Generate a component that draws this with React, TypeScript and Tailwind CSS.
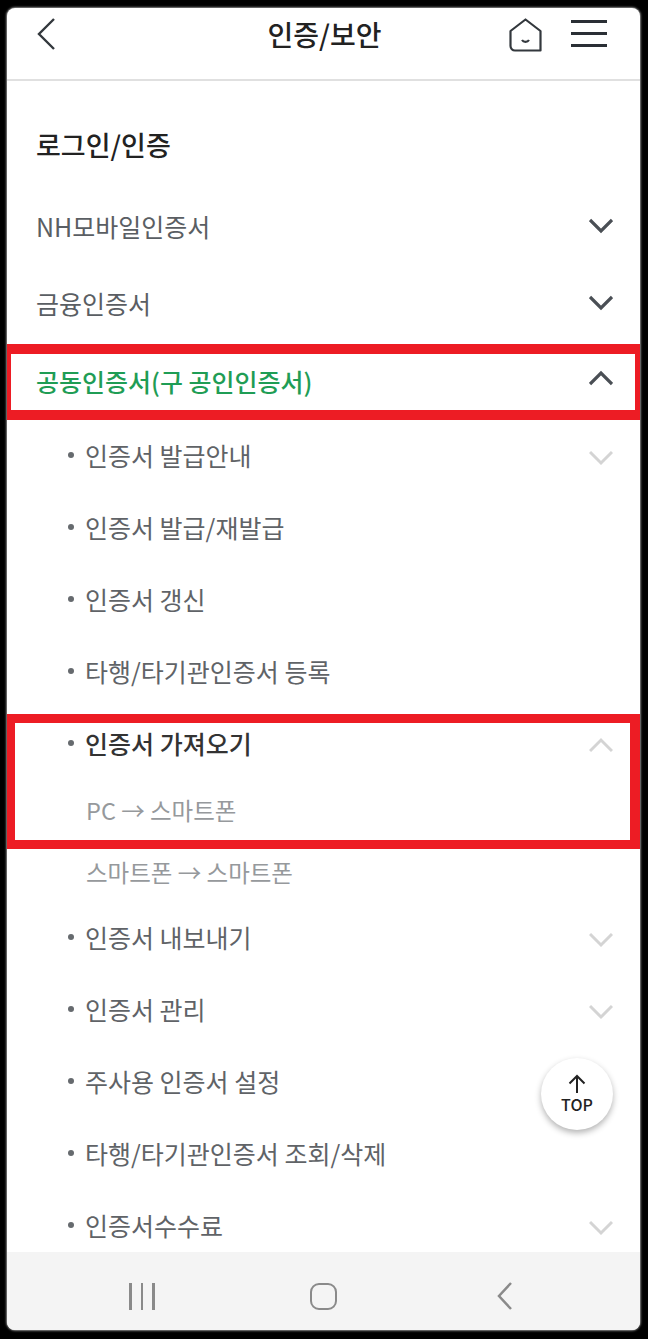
const font = { fontFamily: '"Noto Sans CJK KR", "Noto Sans", sans-serif' };

function Chevron({ up, light }: { up?: boolean; light?: boolean }) {
  let cls = up ? "mb-[6px] text-[#4a4f55]" : "mb-[2px] text-[#4a4f55]";
  if (light) cls = up ? "mt-[2px] text-[#d4d4d4]" : "mt-[4px] text-[#d4d4d4]";
  return (
    <svg width="24" height="16" viewBox="0 0 24 16" fill="none" className={cls}>
      <path d={up ? "M1 14L12 3L23 14" : "M1 2L12 13L23 2"} stroke="currentColor" strokeWidth={light ? 3 : 3.2} />
    </svg>
  );
}

function TopRow({ label, up, green }: { label: string; up?: boolean; green?: boolean }) {
  return (
    <div className="flex h-[77px] items-center justify-between pl-[29px] pr-[27px]">
      <span className={green ? "mt-[2px] text-[25px] font-medium text-[#1f9d55]" : "text-[25px] text-[#5a5e63]"}>{label}</span>
      <Chevron up={up} />
    </div>
  );
}

function SubRow({ label, arrow, bold }: { label: string; arrow?: "up" | "down"; bold?: boolean }) {
  return (
    <div className="flex h-[72px] items-center justify-between pl-[61px] pr-[27px]">
      <div className="flex items-center gap-[11px]">
        <span className="mb-[3px] h-[6px] w-[6px] rounded-full bg-[#666a6e]" />
        <span className={bold ? "text-[25px] font-medium text-[#333]" : "text-[25px] text-[#606367]"}>{label}</span>
      </div>
      {arrow && <Chevron up={arrow === "up"} light />}
    </div>
  );
}

export default function App() {
  return (
    <div className="relative h-[1339px] w-[648px] overflow-hidden bg-black py-[8px] pl-[7px] pr-[8px]" style={font}>
      <div className="relative flex h-[1322px] flex-col overflow-hidden rounded-[8px] bg-white shadow-[0_0_2px_1px_rgba(190,190,190,0.7)]">
        {/* Header */}
        <div className="grid h-[73px] shrink-0 grid-cols-[1fr_auto_1fr] items-center border-b-2 border-[#e0e0e0] pb-[20px] pl-[30px] pr-[33px]">
          <svg width="20" height="34" viewBox="0 0 20 34" fill="none">
            <path d="M17 2L2 17L17 32" stroke="#33383d" strokeWidth="2.4" />
          </svg>
          <span className="ml-[5px] text-[28px] font-medium text-[#222]">인증/보안</span>
          <div className="flex items-center justify-end gap-[29px]">
            <svg width="33" height="34" viewBox="0 0 33 34" fill="none" className="mt-[2px]">
              <path d="M1.5 13L16.5 1.5L31.5 13V32.5H6C3.5 32.5 1.5 30.5 1.5 28Z" stroke="#33383d" strokeWidth="2.2" strokeLinejoin="round" />
              <path d="M13 22C14.5 24.5 18.5 24.5 20 22" stroke="#33383d" strokeWidth="2.2" />
            </svg>
            <div className="flex w-[36px] flex-col gap-[9px]">
              <span className="h-[3px] bg-[#2a2f35]" />
              <span className="h-[3px] bg-[#2a2f35]" />
              <span className="h-[3px] bg-[#2a2f35]" />
            </div>
          </div>
        </div>

        {/* Menu */}
        <div className="flex-1 overflow-hidden">
          <div className="flex h-[107px] items-end pb-[23px] pl-[29px] text-[27px] font-medium text-[#222]">로그인/인증</div>
          <TopRow label="NH모바일인증서" />
          <TopRow label="금융인증서" />
          <TopRow label="공동인증서(구 공인인증서)" up green />
          <div className="mt-[1px]">
            <SubRow label="인증서 발급안내" arrow="down" />
            <SubRow label="인증서 발급/재발급" />
            <SubRow label="인증서 갱신" />
            <SubRow label="타행/타기관인증서 등록" />
            <SubRow label="인증서 가져오기" arrow="up" bold />
            <div className="flex h-[62px] items-center pl-[79px] text-[23.5px] text-[#96999c]">PC → 스마트폰</div>
            <div className="-mb-[2px] flex h-[62px] items-center pl-[79px] text-[23.5px] text-[#96999c]">스마트폰 → 스마트폰</div>
            <SubRow label="인증서 내보내기" arrow="down" />
            <SubRow label="인증서 관리" arrow="down" />
            <SubRow label="주사용 인증서 설정" />
            <SubRow label="타행/타기관인증서 조회/삭제" />
            <SubRow label="인증서수수료" arrow="down" />
          </div>
        </div>

        {/* TOP button */}
        <div className="absolute left-[534px] top-[1050px] flex h-[72px] w-[72px] flex-col items-center justify-center rounded-full bg-white shadow-[0_3px_6px_rgba(0,0,0,0.3)]">
          <svg width="20" height="20" viewBox="0 0 20 20" fill="none">
            <path d="M10 19V2M2.5 9.5L10 2L17.5 9.5" stroke="#222" strokeWidth="2" />
          </svg>
          <span className="text-[16px] font-medium leading-[20px] text-[#222]">TOP</span>
        </div>

        {/* Android nav */}
        <div className="absolute bottom-0 left-0 right-0 flex h-[78px] items-center bg-[#f4f4f4]">
          <div className="flex w-full items-center justify-between pl-[122px] pr-[127px] pt-[10px]">
            <div className="flex gap-[9px]">
              <span className="h-[27px] w-[2.5px] bg-[#8a8a8a]" />
              <span className="h-[27px] w-[2.5px] bg-[#8a8a8a]" />
              <span className="h-[27px] w-[2.5px] bg-[#8a8a8a]" />
            </div>
            <span className="-ml-[4px] h-[27px] w-[27px] rounded-[9px] border-[2.5px] border-[#8a8a8a]" />
            <svg width="16" height="30" viewBox="0 0 16 30" fill="none">
              <path d="M14 2L2 15L14 28" stroke="#8a8a8a" strokeWidth="2.5" />
            </svg>
          </div>
        </div>
      </div>

      {/* Red annotation boxes */}
      <div className="absolute left-[7px] top-[344px] h-[76px] w-[633px] border-y-[10px] border-l-[4px] border-r-[5px] border-[#ed1c24]" />
      <div className="absolute left-[7px] top-[714px] h-[135px] w-[633px] border-y-[9px] border-l-[8px] border-r-[10px] border-[#ed1c24]" />
    </div>
  );
}
